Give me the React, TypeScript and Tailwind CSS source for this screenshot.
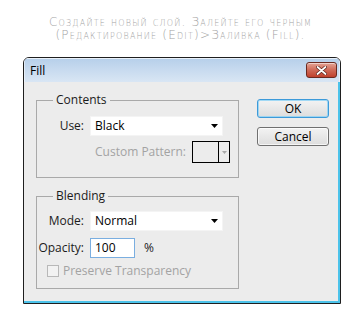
import React from "react";

// little black triangle used by the dropdowns
function Arrow({ gray }: { gray?: boolean }) {
  return (
    <svg width="7" height="4" viewBox="0 0 7 4" className="block">
      <path d="M0 0 H7 L3.5 4 Z" fill={gray ? "#a8a8a8" : "#000"} />
    </svg>
  );
}

function Select({ value }: { value: string }) {
  return (
    <div className="w-[133px] h-[20px] bg-white border border-[#f4f4f4] flex items-center justify-between pl-[4px] pr-[4px] text-black">
      <span>{value}</span>
      <Arrow />
    </div>
  );
}

function App() {
  return (
    <div className="w-[361px] h-[326px] bg-white flex flex-col overflow-hidden font-['Open_Sans','Noto_Sans',sans-serif] text-[12px]">
      {/* caption above the dialog */}
      <div className="pt-[16px] text-center text-[12px] leading-[13px] text-[#a3a3a3] font-['DejaVu_Sans',sans-serif] font-light [font-variant:small-caps] tracking-[1.2px]">
        <div>Создайте новый слой. Залейте его черным</div>
        <div>(Редактирование (Edit)&gt;Заливка (Fill).</div>
      </div>

      {/* the Fill dialog */}
      <div className="mt-[15px] ml-[23px] w-[318px] h-[247px] border border-[#1f1f1f] rounded-t-[6px] overflow-hidden flex flex-col">
        {/* title bar */}
        <div className="h-[24px] bg-gradient-to-b from-[#b6cfea] to-[#d9e6f4] shadow-[inset_0_1px_0_rgba(255,255,255,0.7),inset_1px_0_0_rgba(255,255,255,0.5),inset_-1px_0_0_rgba(255,255,255,0.5)] flex justify-between items-start">
          <span className="pl-[6px] pt-[5px] leading-[16px] text-black">Fill</span>
          <div className="mt-[4px] mr-[3px] w-[31px] h-[16px] rounded-[3px] border border-[#6b2a20] bg-gradient-to-b from-[#e4a496] via-[#cf6a58] to-[#c0402c] flex items-center justify-center shadow-[inset_0_1px_0_rgba(255,255,255,0.5)]">
            <svg width="11" height="9" viewBox="0 0 11 9">
              <path d="M1.5 1 L9.5 8 M9.5 1 L1.5 8" stroke="#5a2018" strokeWidth="3.2" strokeLinecap="round" />
              <path d="M1.5 1 L9.5 8 M9.5 1 L1.5 8" stroke="#fff" strokeWidth="1.8" strokeLinecap="round" />
            </svg>
          </div>
        </div>

        {/* body */}
        <div className="flex-1 bg-[#ececec] border-r-2 border-b-2 border-[#4cc3ea] flex pl-[12px] pt-[10px]">
          {/* left column with the two group boxes */}
          <div className="w-[203px] flex flex-col gap-[10px]">
            <fieldset className="border border-[#a9a9a9] pt-[8px] pb-[14px] pr-[8px] flex flex-col gap-[5px]">
              <legend className="ml-[16px] px-[3px] leading-[16px] text-[#1b1b1b]">Contents</legend>
              <div className="flex items-center">
                <span className="w-[53px] text-right pr-[6px] text-[#1b1b1b]">Use:</span>
                <Select value="Black" />
              </div>
              <div className="flex items-center justify-end gap-[6px]">
                <span className="text-[#a3a3a3]">Custom Pattern:</span>
                <div className="w-[38px] h-[22px] border border-black bg-[#ececec] flex">
                  <div className="flex-1 border-r border-black" />
                  <div className="w-[10px] flex items-center justify-center">
                    <svg width="5" height="3" viewBox="0 0 5 3">
                      <path d="M0 0 H5 L2.5 3 Z" fill="#a8a8a8" />
                    </svg>
                  </div>
                </div>
              </div>
            </fieldset>

            <fieldset className="border border-[#a9a9a9] pt-[7px] pb-[10px] pr-[8px] flex flex-col">
              <legend className="ml-[16px] px-[3px] leading-[16px] text-[#1b1b1b]">Blending</legend>
              <div className="flex items-center">
                <span className="w-[53px] text-right pr-[6px] text-[#1b1b1b]">Mode:</span>
                <Select value="Normal" />
              </div>
              <div className="flex items-center mt-[7px]">
                <span className="w-[53px] text-right pr-[6px] text-[#1b1b1b]">Opacity:</span>
                <div className="w-[45px] h-[20px] bg-white border border-[#7aaee0] pl-[4px] flex items-center text-black">
                  100
                </div>
                <span className="ml-[9px] text-[#1b1b1b]">%</span>
              </div>
              <div className="flex items-center mt-[6px] pl-[10px] gap-[4px] h-[14px]">
                <div className="w-[12px] h-[12px] border border-[#b8b8b8] bg-[#f2f2f2]" />
                <span className="text-[#a3a3a3]">Preserve Transparency</span>
              </div>
            </fieldset>
          </div>

          {/* buttons */}
          <div className="ml-[18px] pt-[7px] flex flex-col gap-[9px]">
            <button className="w-[72px] h-[19px] rounded-[3px] border border-[#3d9ad9] bg-gradient-to-b from-[#f3f3f3] to-[#dddddd] shadow-[inset_0_0_0_1px_rgba(140,210,245,0.8)] text-black leading-none">
              OK
            </button>
            <button className="w-[72px] h-[19px] rounded-[3px] border border-[#707070] bg-gradient-to-b from-[#f3f3f3] to-[#dddddd] shadow-[inset_0_0_0_1px_rgba(255,255,255,0.7)] text-black leading-none">
              Cancel
            </button>
          </div>
        </div>
      </div>
    </div>
  );
}

export default App;
